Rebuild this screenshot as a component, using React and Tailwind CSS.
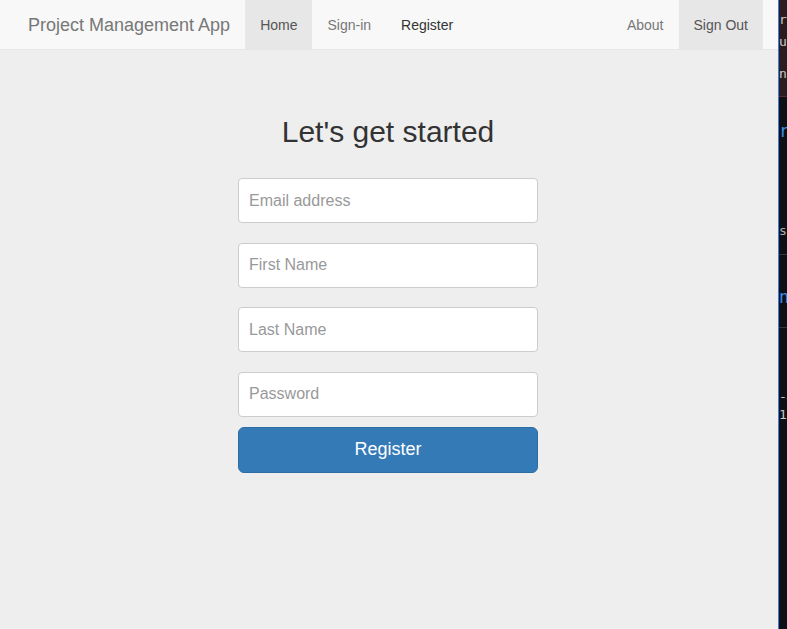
import React from 'react';

const navLinks = [
  { label: 'Home', active: true },
  { label: 'Sign-in' },
  { label: 'Register', hover: true },
];

const fields = ['Email address', 'First Name', 'Last Name', 'Password'];

// sliver of an editor window peeking in at the right edge
const EditorSliver = () => (
  <div className="w-[9px] shrink-0 border-l border-[#3c7fd6] bg-[#0d1117] overflow-hidden font-['DejaVu_Sans_Mono',monospace] text-[13px] leading-none">
    <div className="h-[97px] bg-[#2a1c20] border-b border-[#5a2a30] text-[#c9c9c9] whitespace-nowrap">
      <div className="pt-[13px]">ro</div>
      <div className="pt-[9px]">u</div>
      <div className="pt-[19px]">n</div>
    </div>
    <div className="h-[158px] border-b border-[#30363d] whitespace-nowrap">
      <div className="pt-[26px] text-[17px] text-[#3a8ee6]">rc</div>
      <div className="pt-[84px] text-[#b0b0b0]">ss</div>
    </div>
    <div className="h-[73px] border-b border-[#30363d] whitespace-nowrap">
      <div className="pt-[34px] text-[17px] text-[#3a8ee6]">n</div>
    </div>
    <div className="whitespace-nowrap">
      <div className="pt-[62px] text-[#c9c9c9]">-<span className="text-[#d7ba7d]">#</span></div>
      <div className="pt-[5px] text-[#c9c9c9]">1<span className="text-[#4ec9b0]">p</span></div>
    </div>
  </div>
);

export default function App() {
  return (
    <div className="flex h-[629px] w-full overflow-hidden font-['Liberation_Sans',Arial,sans-serif]">
      <div className="flex-1 flex flex-col bg-[#eeeeee]">
        <nav className="h-[50px] shrink-0 flex bg-[#f8f8f8] border-b border-[#e7e7e7] text-[14px]">
          <div className="pl-[28px] pr-[15px] pt-[2px] flex items-center text-[18px] text-[#777777]">
            Project Management App
          </div>
          {navLinks.map((l) => (
            <div
              key={l.label}
              className={`px-[15px] pt-[2px] flex items-center ${
                l.active ? 'bg-[#e7e7e7] text-[#555555]' : l.hover ? 'text-[#333333]' : 'text-[#777777]'
              }`}
            >
              {l.label}
            </div>
          ))}
          <div className="flex-1" />
          <div className="px-[15px] pt-[2px] flex items-center text-[#777777]">About</div>
          <div className="px-[15px] pt-[2px] flex items-center bg-[#e7e7e7] text-[#555555]">Sign Out</div>
          <div className="w-[15px]" />
        </nav>

        <main className="flex flex-col items-center pr-[2px]">
          <h2 className="mt-[65px] mb-[30px] text-[30px] leading-[33px] text-[#333333]">Let's get started</h2>
          <form className="w-[300px] flex flex-col gap-[19.5px]" onSubmit={(e) => e.preventDefault()}>
            {fields.map((f) => (
              <input
                key={f}
                type={f === 'Password' ? 'password' : 'text'}
                placeholder={f}
                className="h-[45px] w-full px-[10px] bg-white border border-[#cccccc] rounded-[4px] text-[16px] text-[#555555] placeholder:text-[#999999] outline-none"
              />
            ))}
          </form>
          <button className="mt-[10px] w-[300px] h-[46px] rounded-[6px] bg-[#337ab7] border border-[#2e6da4] text-white text-[18px]">
            Register
          </button>
        </main>
      </div>
      <EditorSliver />
    </div>
  );
}
